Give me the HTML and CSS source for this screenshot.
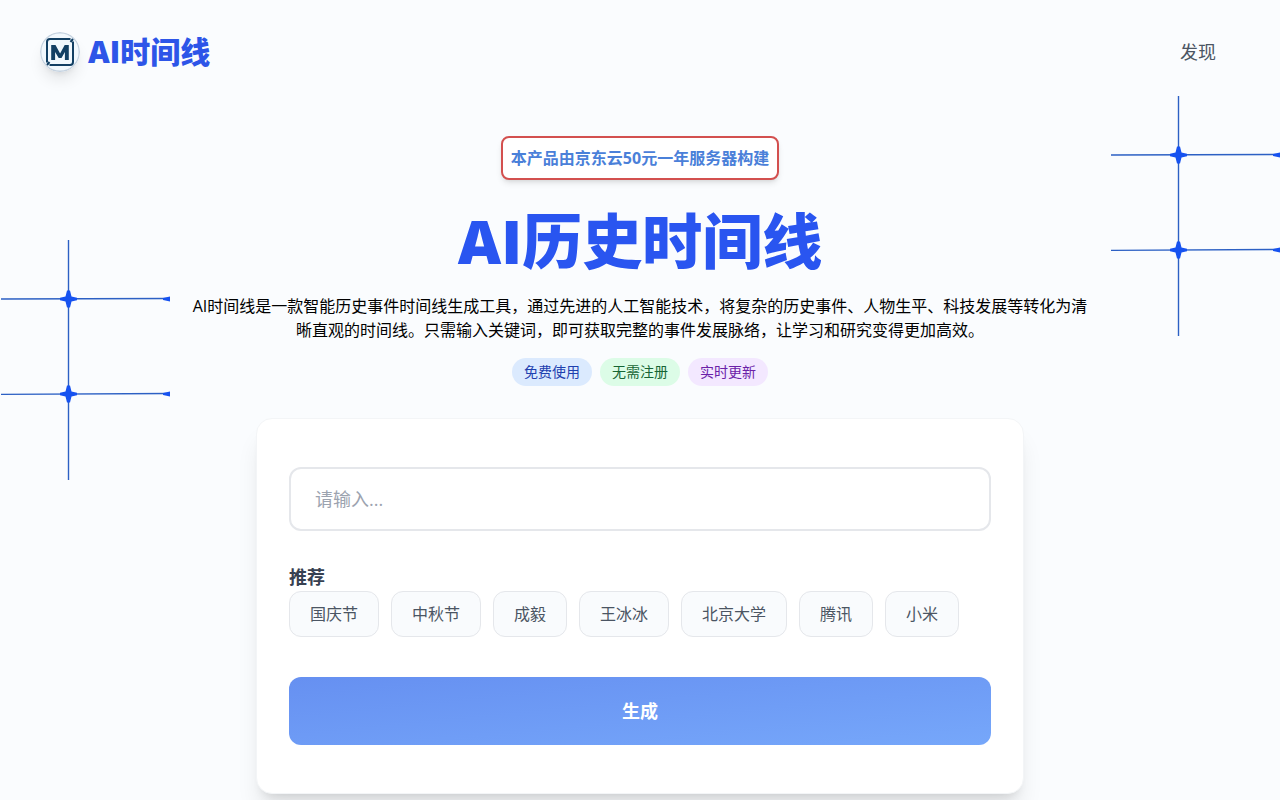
FILE: index.html
```
<!DOCTYPE html>
<html lang="zh-CN">
<head>
  <meta charset="UTF-8">
  <meta name="viewport" content="width=device-width, initial-scale=1.0">
  <title>AI时间线</title>
  <link rel="stylesheet" href="styles.css">
</head>
<body>

  <svg class="defs" width="0" height="0" aria-hidden="true">
    <symbol id="grid" viewBox="0 0 170 240">
      <g fill="none" stroke="#2c60c4" stroke-width="1.400">
        <path d="M68.5 0V240" />
        <path d="M1 59L170 58.500" />
        <path d="M1 154.400L170 153.500" />
      </g>
      <g fill="#1652f0">
        <path d="M67 50.500h3l1.500 6 5.500 1.200v2.600l-5.500 1.200-1.500 6h-3l-1.500-6-5.500-1.200v-2.600l5.500-1.200z" />
        <path d="M67 145.500h3l1.500 6 5.500 1.200v2.600l-5.500 1.200-1.500 6h-3l-1.500-6-5.500-1.200v-2.600l5.500-1.200z" />
        <path d="M163 58l7-1.500v5l-7-1.500z" />
        <path d="M163 153l7-1.500v5l-7-1.500z" />
      </g>
    </symbol>
  </svg>

  <svg class="grid-lines grid-left" aria-hidden="true"><use href="#grid" /></svg>
  <svg class="grid-lines grid-right" aria-hidden="true"><use href="#grid" /></svg>

  <header class="header">
    <a class="brand" href="#">
      <svg class="logo" viewBox="0 0 40 40" aria-hidden="true">
        <circle cx="20" cy="20" r="19.300" fill="#f1f8fd" stroke="#c6d3e0" stroke-width="1.400" />
        <g fill="none" stroke="#123f63" stroke-width="2">
          <path d="M30.500 7H10a3 3 0 0 0-3 3V30.500" />
          <path d="M9.500 33H30a3 3 0 0 0 3-3V9.500" />
          <path d="M30.500 10l2.500-3M7 33l2.500-3" />
        </g>
        <path d="M11.200 28V13h4.300l4.600 8.600 4.600-8.600h4.100v15h-3.900v-8L21.500 26h-2.800l-3.600-6v8z" fill="#123f63" />
      </svg>
      <span class="brand-name">AI时间线</span>
    </a>
    <nav>
      <a class="nav-link" href="#">发现</a>
    </nav>
  </header>

  <main class="main">
    <a class="sponsor" href="#">本产品由京东云50元一年服务器构建</a>
    <h1 class="title">AI历史时间线</h1>
    <p class="intro">AI时间线是一款智能历史事件时间线生成工具，通过先进的人工智能技术，将复杂的历史事件、人物生平、科技发展等转化为清晰直观的时间线。只需输入关键词，即可获取完整的事件发展脉络，让学习和研究变得更加高效。</p>
    <div class="tags">
      <span class="tag tag-blue">免费使用</span>
      <span class="tag tag-green">无需注册</span>
      <span class="tag tag-purple">实时更新</span>
    </div>

    <form class="card">
      <input class="keyword" type="text" placeholder="请输入..." aria-label="关键词">
      <h2 class="hot-title">推荐</h2>
      <div class="hot-list">
        <button type="button" class="chip">国庆节</button>
        <button type="button" class="chip">中秋节</button>
        <button type="button" class="chip">成毅</button>
        <button type="button" class="chip">王冰冰</button>
        <button type="button" class="chip">北京大学</button>
        <button type="button" class="chip">腾讯</button>
        <button type="button" class="chip">小米</button>
      </div>
      <button type="submit" class="submit">生成</button>
    </form>
  </main>

</body>
</html>
```

FILE: styles.css
```
* {
  margin: 0;
  padding: 0;
  box-sizing: border-box;
}

body {
  position: relative;
  min-height: 100vh;
  background: #fafcfe;
  color: #000;
  font-family: "Open Sans", "Noto Sans CJK SC", sans-serif;
  font-size: 16px;
  line-height: 24px;
  overflow-x: hidden;
}

a {
  text-decoration: none;
}

button,
input {
  font-family: inherit;
}

/* background decoration */
.defs {
  position: absolute;
}

.grid-lines {
  position: absolute;
  width: 170px;
  height: 240px;
  pointer-events: none;
}

.grid-left {
  left: 0;
  top: 240px;
}

.grid-right {
  right: 0;
  top: 96px;
}

/* header */
.header {
  display: flex;
  justify-content: space-between;
  align-items: center;
  padding: 32px 64px 32px 40px;
}

.brand {
  display: flex;
  align-items: center;
  gap: 8px;
}

.logo {
  width: 40px;
  height: 40px;
  border-radius: 50%;
  box-shadow: 0 10px 15px -3px rgba(0, 0, 0, 0.1), 0 4px 6px -4px rgba(0, 0, 0, 0.1);
}

.brand-name {
  font-size: 30px;
  line-height: 36px;
  font-weight: 800;
  color: #2d55e8;
}

.nav-link {
  font-size: 18px;
  color: #4b5563;
}

/* content */
.main {
  display: flex;
  flex-direction: column;
  align-items: center;
  padding: 32px 16px 0;
}

.sponsor {
  padding: 8px;
  border: 2px solid #d3504f;
  border-radius: 8px;
  background: #fff;
  color: #4a80d9;
  font-weight: bold;
  box-shadow: 0 4px 6px -1px rgba(0, 0, 0, 0.1), 0 2px 4px -2px rgba(0, 0, 0, 0.1);
}

.title {
  margin-top: 24px;
  font-size: 60px;
  line-height: 74px;
  font-weight: 800;
  color: #2955f0;
}

.intro {
  max-width: 896px;
  margin-top: 16px;
  text-align: center;
}

.tags {
  display: flex;
  gap: 8px;
  margin-top: 16px;
}

.tag {
  padding: 4px 12px;
  border-radius: 14px;
  font-size: 14px;
  line-height: 20px;
}

.tag-blue {
  background: #dbeafe;
  color: #1e40af;
}

.tag-green {
  background: #dcfce7;
  color: #166534;
}

.tag-purple {
  background: #f3e8ff;
  color: #6b21a8;
}

/* search card */
.card {
  width: 100%;
  max-width: 768px;
  margin-top: 32px;
  padding: 48px 32px;
  border: 1px solid #f3f5f7;
  border-radius: 16px;
  background: #fff;
  box-shadow: 0 20px 25px -5px rgba(0, 0, 0, 0.1), 0 8px 10px -6px rgba(0, 0, 0, 0.1);
}

.keyword {
  display: block;
  width: 100%;
  height: 64px;
  padding: 0 24px;
  border: 2px solid #e5e7eb;
  border-radius: 12px;
  background: #fff;
  font-size: 18px;
}

.keyword::placeholder {
  color: #9ca3af;
}

.hot-title {
  margin-top: 32px;
  font-size: 18px;
  line-height: 28px;
  color: #374151;
}

.hot-list {
  display: flex;
  flex-wrap: wrap;
  gap: 12px;
}

.chip {
  padding: 10px 20px;
  border: 1px solid #e5e7eb;
  border-radius: 12px;
  background: #f9fbfd;
  color: #4b5563;
  font-size: 16px;
  line-height: 24px;
  cursor: pointer;
}

.submit {
  display: block;
  width: 100%;
  margin-top: 40px;
  padding: 20px;
  border: none;
  border-radius: 12px;
  background: linear-gradient(to bottom right, #6690f1, #76a7fa);
  color: #fff;
  font-size: 18px;
  line-height: 28px;
  font-weight: bold;
  cursor: pointer;
}
```
